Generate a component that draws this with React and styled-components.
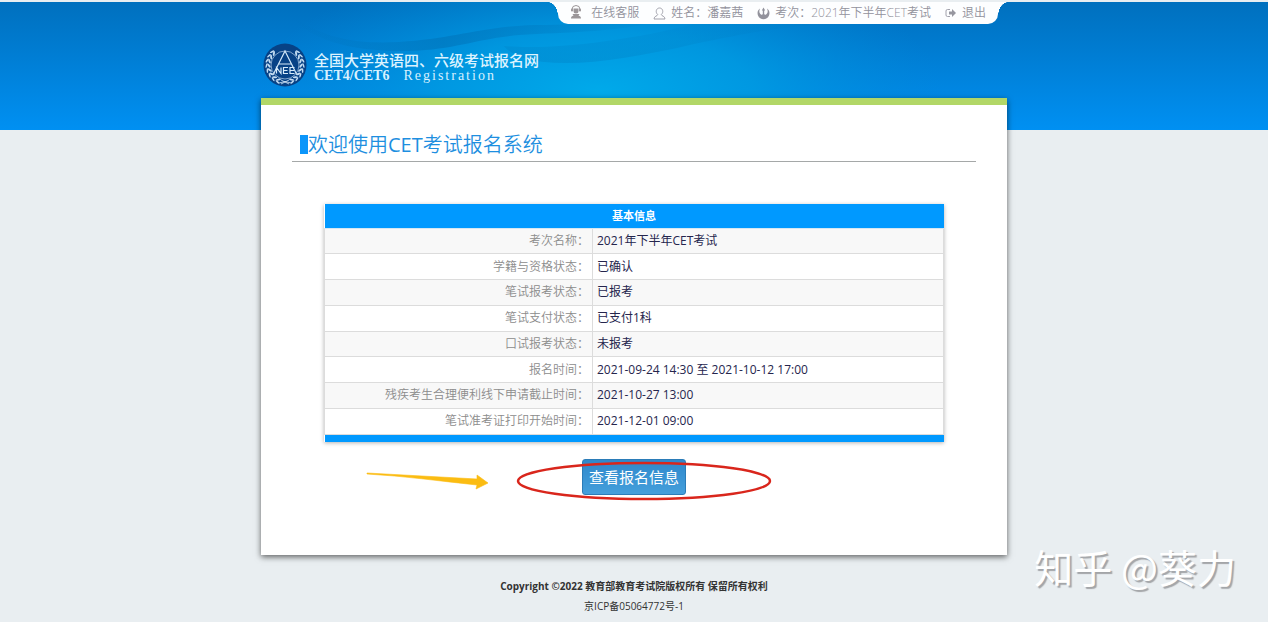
import React from 'react';
import styled, { createGlobalStyle } from 'styled-components';

const GlobalStyle = createGlobalStyle`
	* { box-sizing: border-box; }

	body {
		margin: 0;
		background-color: #e9eef1;
		font-family: 'Open Sans', 'Noto Sans CJK SC', sans-serif;
		font-size: 12px;
		color: #333;
	}
`;

const Page = styled.div`
	position: relative;
	min-height: 100vh;
	overflow: hidden;
	background: linear-gradient(#0070be, #0090f2) 0 2px / 100% 128px no-repeat;
`;

const Backdrop = styled.svg`
	position: absolute;
	top: 2px;
	left: 50%;
	width: 760px;
	height: 128px;
	margin-left: -380px;
`;

const Container = styled.div`
	position: relative;
	width: 100%;
	max-width: 746px;
	margin: 0 auto;
`;

const Header = styled.header`
	display: flex;
	flex-direction: column;
	height: 98px;
	padding-top: 2px;
`;

const UserBar = styled.nav`
	position: relative;
	display: flex;
	align-items: center;
	align-self: flex-end;
	gap: 14px;
	height: 22px;
	margin-right: 9px;
	padding: 0 12px;
	border-radius: 0 0 10px 10px;
	background-color: #fdfeff;
	color: #92929c;
	font-weight: 350;
	white-space: nowrap;

	&::before,
	&::after {
		content: '';
		position: absolute;
		top: 0;
		width: 10px;
		height: 14px;
	}

	&::before {
		right: 100%;
		background: radial-gradient(ellipse 10px 14px at 0 100%, transparent 97%, #fdfeff);
	}

	&::after {
		left: 100%;
		background: radial-gradient(ellipse 10px 14px at 100% 100%, transparent 97%, #fdfeff);
	}
`;

const BarItem = styled.span`
	display: flex;
	align-items: center;
	gap: ${(props) => props.$gap || 5}px;
	color: inherit;
	line-height: 20px;
	text-decoration: none;
`;

const Brand = styled.a`
	display: flex;
	align-items: center;
	gap: 7px;
	margin-top: 19px;
	padding-left: 2px;
	color: #fff;
	text-decoration: none;
`;

const BrandName = styled.div`
	padding-top: 3px;
	font-family: 'Noto Sans CJK SC', sans-serif;
	font-size: 15px;
	font-weight: 500;
	line-height: 18px;
	color: #dcf3ff;
`;

const BrandSub = styled.div`
	display: flex;
	gap: 14px;
	font-family: 'Liberation Serif', serif;
	font-size: 14px;
	line-height: 14px;
	color: #d8f1ff;
`;

const BrandLatin = styled.span`
	letter-spacing: ${(props) => (props.$wide ? '2px' : 'normal')};
	font-weight: ${(props) => (props.$wide ? 400 : 700)};
`;

const Card = styled.main`
	padding: 25px 31px 60px;
	border-top: 7px solid #b2d767;
	background-color: #fff;
	box-shadow: 0 2px 6px rgba(0, 0, 0, 0.6);
`;

const Title = styled.h1`
	display: flex;
	align-items: center;
	margin: 0;
	padding: 0 0 2px 8px;
	border-bottom: 1px solid #a5a8a8;
	color: #1e8fe0;
	font-size: 20px;
	font-weight: 350;
	line-height: 29px;

	&::before {
		content: '';
		width: 8px;
		height: 19px;
		background-color: #0c96fa;
	}
`;

const Latin = styled.span`
	font-weight: 400;
`;

const Info = styled.div`
	margin: 42px 32px 0;
	box-shadow: 0 1px 4px rgba(0, 0, 0, 0.3);
`;

const InfoTable = styled.table`
	width: 100%;
	height: 238px;
	border-collapse: collapse;
	table-layout: fixed;
`;

const LabelColumn = styled.col`
	width: 268px;
`;

const InfoHead = styled.th`
	height: 24px;
	padding: 0;
	border-bottom: 1px solid #d5e7f3;
	background-color: #0099ff;
	color: #fff;
	font-size: 11px;
	line-height: 22px;
`;

const InfoRow = styled.tr`
	background-color: #fff;

	&:nth-child(odd) {
		background-color: #f8f8f8;
	}
`;

const InfoLabel = styled.th`
	padding: 0 3px 0 0;
	border: 1px solid #dcdcdc;
	color: #8c8c8c;
	font-weight: 350;
	line-height: 20px;
	text-align: right;
`;

const InfoValue = styled.td`
	padding: 0 4px;
	border: 1px solid #dcdcdc;
	color: #25254d;
	line-height: 20px;
`;

const InfoFoot = styled.td`
	height: 8px;
	padding: 0;
	background-color: #0099ff;
`;

const Actions = styled.div`
	position: relative;
	display: flex;
	justify-content: center;
	margin-top: 17px;
`;

const Button = styled.button`
	height: 36px;
	padding: 0 6px;
	border: 1px solid #2b7cb8;
	border-radius: 3px;
	background: linear-gradient(#2f88cc, #449fdb);
	color: #fff;
	font-family: inherit;
	font-size: 15px;
	line-height: 20px;
	cursor: pointer;
`;

const Marks = styled.svg`
	position: absolute;
	top: 0;
	left: 50%;
	margin-left: -271px;
	pointer-events: none;
`;

const Footer = styled.footer`
	margin-top: 21px;
	font-size: 10px;
	line-height: 20px;
	text-align: center;
`;

const Watermark = styled.div`
	position: absolute;
	right: 32px;
	bottom: 28px;
	color: #fff;
	font-family: 'Noto Sans CJK SC', sans-serif;
	font-size: 39px;
	line-height: 56px;
	text-shadow: 2px 2px 1px #a3a5a8;
	pointer-events: none;
`;

const rows = [
	['考次名称：', '2021年下半年CET考试'],
	['学籍与资格状态：', '已确认'],
	['笔试报考状态：', '已报考'],
	['笔试支付状态：', '已支付1科'],
	['口试报考状态：', '未报考'],
	['报名时间：', '2021-09-24 14:30 至 2021-10-12 17:00'],
	['残疾考生合理便利线下申请截止时间：', '2021-10-27 13:00'],
	['笔试准考证打印开始时间：', '2021-12-01 09:00']
];

function ServiceIcon() {
	return (
		<svg width="12" height="16" viewBox="0 0 12 16" fill="#9b9699">
			<path d="M2 4.500a4 4 0 0 1 8 0" fill="none" stroke="#9b9699" />
			<rect x="1" y="3.500" width="2" height="3" rx="1" />
			<rect x="9" y="3.500" width="2" height="3" rx="1" />
			<path d="M3.500 3.500h5V6a2.500 2.500 0 0 1-5 0z" />
			<path d="M1 13.500c0-2 1-2.500 2.500-3L2.500 9h7l-1 1.500c1.500.5 2.500 1 2.500 3z" />
		</svg>
	);
}

function UserIcon() {
	return (
		<svg width="13" height="13" viewBox="0 0 13 13" fill="none" stroke="#a2a2ac">
			<path d="M4.700 7.500C2.200 5.500 3 1 6.500 1s4.300 4.500 1.800 6.500c0 1.600 3.700 1.400 3.700 4.500H1c0-3.100 3.700-2.900 3.700-4.500z" />
		</svg>
	);
}

function ExamIcon() {
	return (
		<svg width="13" height="13" viewBox="0 0 13 13">
			<path d="M3 1.500C.6 3 0 6 1 8.500 2 11 4.200 12.300 6.500 12.300S11 11 12 8.500c1-2.500.4-5.500-2-7 1.100 2.300.9 4.800-.9 6-.9.500-1.600.2-1.900-.5V3.500h1L6.500.5l-1.700 3h1V7c-.3.700-1 1-1.900.5C2.100 6.300 1.900 3.800 3 1.500z" fill="#92929c" />
		</svg>
	);
}

function ExitIcon() {
	return (
		<svg width="12" height="12" viewBox="0 0 12 12" fill="none" stroke="#a2a2ac">
			<path d="M5 2.500H2.500a1.500 1.500 0 0 0-1.500 1.500v4a1.500 1.500 0 0 0 1.500 1.500H5" />
			<path d="M4 4.500h3V2l4 4-4 4V7.500H4z" fill="#96969f" stroke="none" />
		</svg>
	);
}

function Emblem() {
	const leaves = [];

	for (let i = 0; i < 8; i++) {
		const angle = 24 + i * 16;
		leaves.push(
			<g key={i} transform={`rotate(${angle} 22 22)`}>
				<ellipse cx="22" cy="38" rx="2.500" ry="1" transform="rotate(-35 22 38)" />
				<ellipse cx="22" cy="40.500" rx="2.400" ry=".8" transform="rotate(18 22 40.500)" />
			</g>
		);
	}

	return (
		<svg width="44" height="44" viewBox="0 0 44 44">
			<circle cx="22" cy="22" r="21.500" fill="#074286" />
			<g fill="#c3dcf2">
				{leaves}
				<g transform="matrix(-1 0 0 1 44 0)">{leaves}</g>
			</g>
			<g fill="none" stroke="#d5eafa">
				<circle cx="22" cy="22" r="14" strokeWidth=".6" />
				<path d="M16 40q6-3 12 0M18 37l8 4m0-4l-8 4" strokeWidth=".8" />
				<path d="M10.500 31L22 8l11.500 23M16 21h12" strokeWidth="1.200" />
				<path d="M13.500 30.500V24.500l4.500 6v-6M25 24.500h-4.500v6H25m-4.500-3h4M31.500 24.500H27v6h4.500M27 27.500h4" strokeWidth="1.200" />
			</g>
		</svg>
	);
}

function HeaderBackdrop() {
	return (
		<Backdrop viewBox="0 0 760 128" preserveAspectRatio="none" aria-hidden="true">
			<defs>
				<radialGradient id="glow" gradientUnits="userSpaceOnUse" cx="0" cy="0" r="1" gradientTransform="translate(345 90) scale(345 135)">
					<stop offset="0" stopColor="#00aaea" />
					<stop offset=".45" stopColor="#009de2" stopOpacity=".8" />
					<stop offset="1" stopColor="#008ad8" stopOpacity="0" />
				</radialGradient>
				<linearGradient id="fold" x1="0" x2="1">
					<stop offset="0" stopColor="#006fb4" stopOpacity="0" />
					<stop offset=".4" stopColor="#006fb4" stopOpacity=".5" />
					<stop offset="1" stopColor="#006fb4" stopOpacity="0" />
				</linearGradient>
				<linearGradient id="shade" x1="0" y1="0" x2="0" y2="1">
					<stop offset="0" stopColor="#0078bc" stopOpacity=".1" />
					<stop offset="1" stopColor="#0078bc" stopOpacity=".3" />
				</linearGradient>
			</defs>
			<rect width="760" height="128" fill="url(#glow)" />
			<path d="M35 12c35 26 70 30 110 28 55-3 80-15 135-17 60 0 100-4 140-8-50 16-110 15-155 18-45 4-60 14-110 16-55 1-100-10-120-37z" fill="url(#fold)" />
			<path d="M250 44c45 4 120-4 190-22h140c-60 3-90 10-140 20-60 14-110 22-150 18-20-2-35-9-40-16z" fill="url(#shade)" />
		</Backdrop>
	);
}

function App() {
	return (
		<>
			<GlobalStyle />
			<Page>
				<HeaderBackdrop />
				<Container>
					<Header>
						<UserBar>
							<BarItem as="a" href="#service" $gap={9}><ServiceIcon />在线客服</BarItem>
							<BarItem><UserIcon />姓名：潘嘉茜</BarItem>
							<BarItem><ExamIcon />考次：2021年下半年CET考试</BarItem>
							<BarItem as="a" href="#logout"><ExitIcon />退出</BarItem>
						</UserBar>
						<Brand href="#home">
							<Emblem />
							<div>
								<BrandName>全国大学英语四、六级考试报名网</BrandName>
								<BrandSub>
									<BrandLatin>CET4/CET6</BrandLatin>
									<BrandLatin $wide>Registration</BrandLatin>
								</BrandSub>
							</div>
						</Brand>
					</Header>
					<Card>
						<Title>欢迎使用<Latin>CET</Latin>考试报名系统</Title>
						<Info>
							<InfoTable>
								<colgroup>
									<LabelColumn />
									<col />
								</colgroup>
								<thead>
									<tr><InfoHead colSpan="2">基本信息</InfoHead></tr>
								</thead>
								<tbody>
									{rows.map(([label, value]) => (
										<InfoRow key={label}>
											<InfoLabel scope="row">{label}</InfoLabel>
											<InfoValue>{value}</InfoValue>
										</InfoRow>
									))}
								</tbody>
								<tfoot>
									<tr><InfoFoot colSpan="2" /></tr>
								</tfoot>
							</InfoTable>
						</Info>
						<Actions>
							<Button type="button">查看报名信息</Button>
							<Marks width="410" height="44" viewBox="0 0 410 44" aria-hidden="true">
								<path d="M4 14l110 6v-4l11 8-12 6 1-4C76 22 41 17 4 15z" fill="#fbbc12" stroke="#fbbc12" strokeWidth=".6" />
								<ellipse cx="281" cy="22" rx="126" ry="18" fill="none" stroke="#d9261c" strokeWidth="2.500" />
							</Marks>
						</Actions>
					</Card>
					<Footer>
						<div><strong>Copyright ©2022 教育部教育考试院版权所有 保留所有权利</strong></div>
						<div>京ICP备05064772号-1</div>
					</Footer>
				</Container>
				<Watermark>知乎 @葵力</Watermark>
			</Page>
		</>
	);
}

export default App;
